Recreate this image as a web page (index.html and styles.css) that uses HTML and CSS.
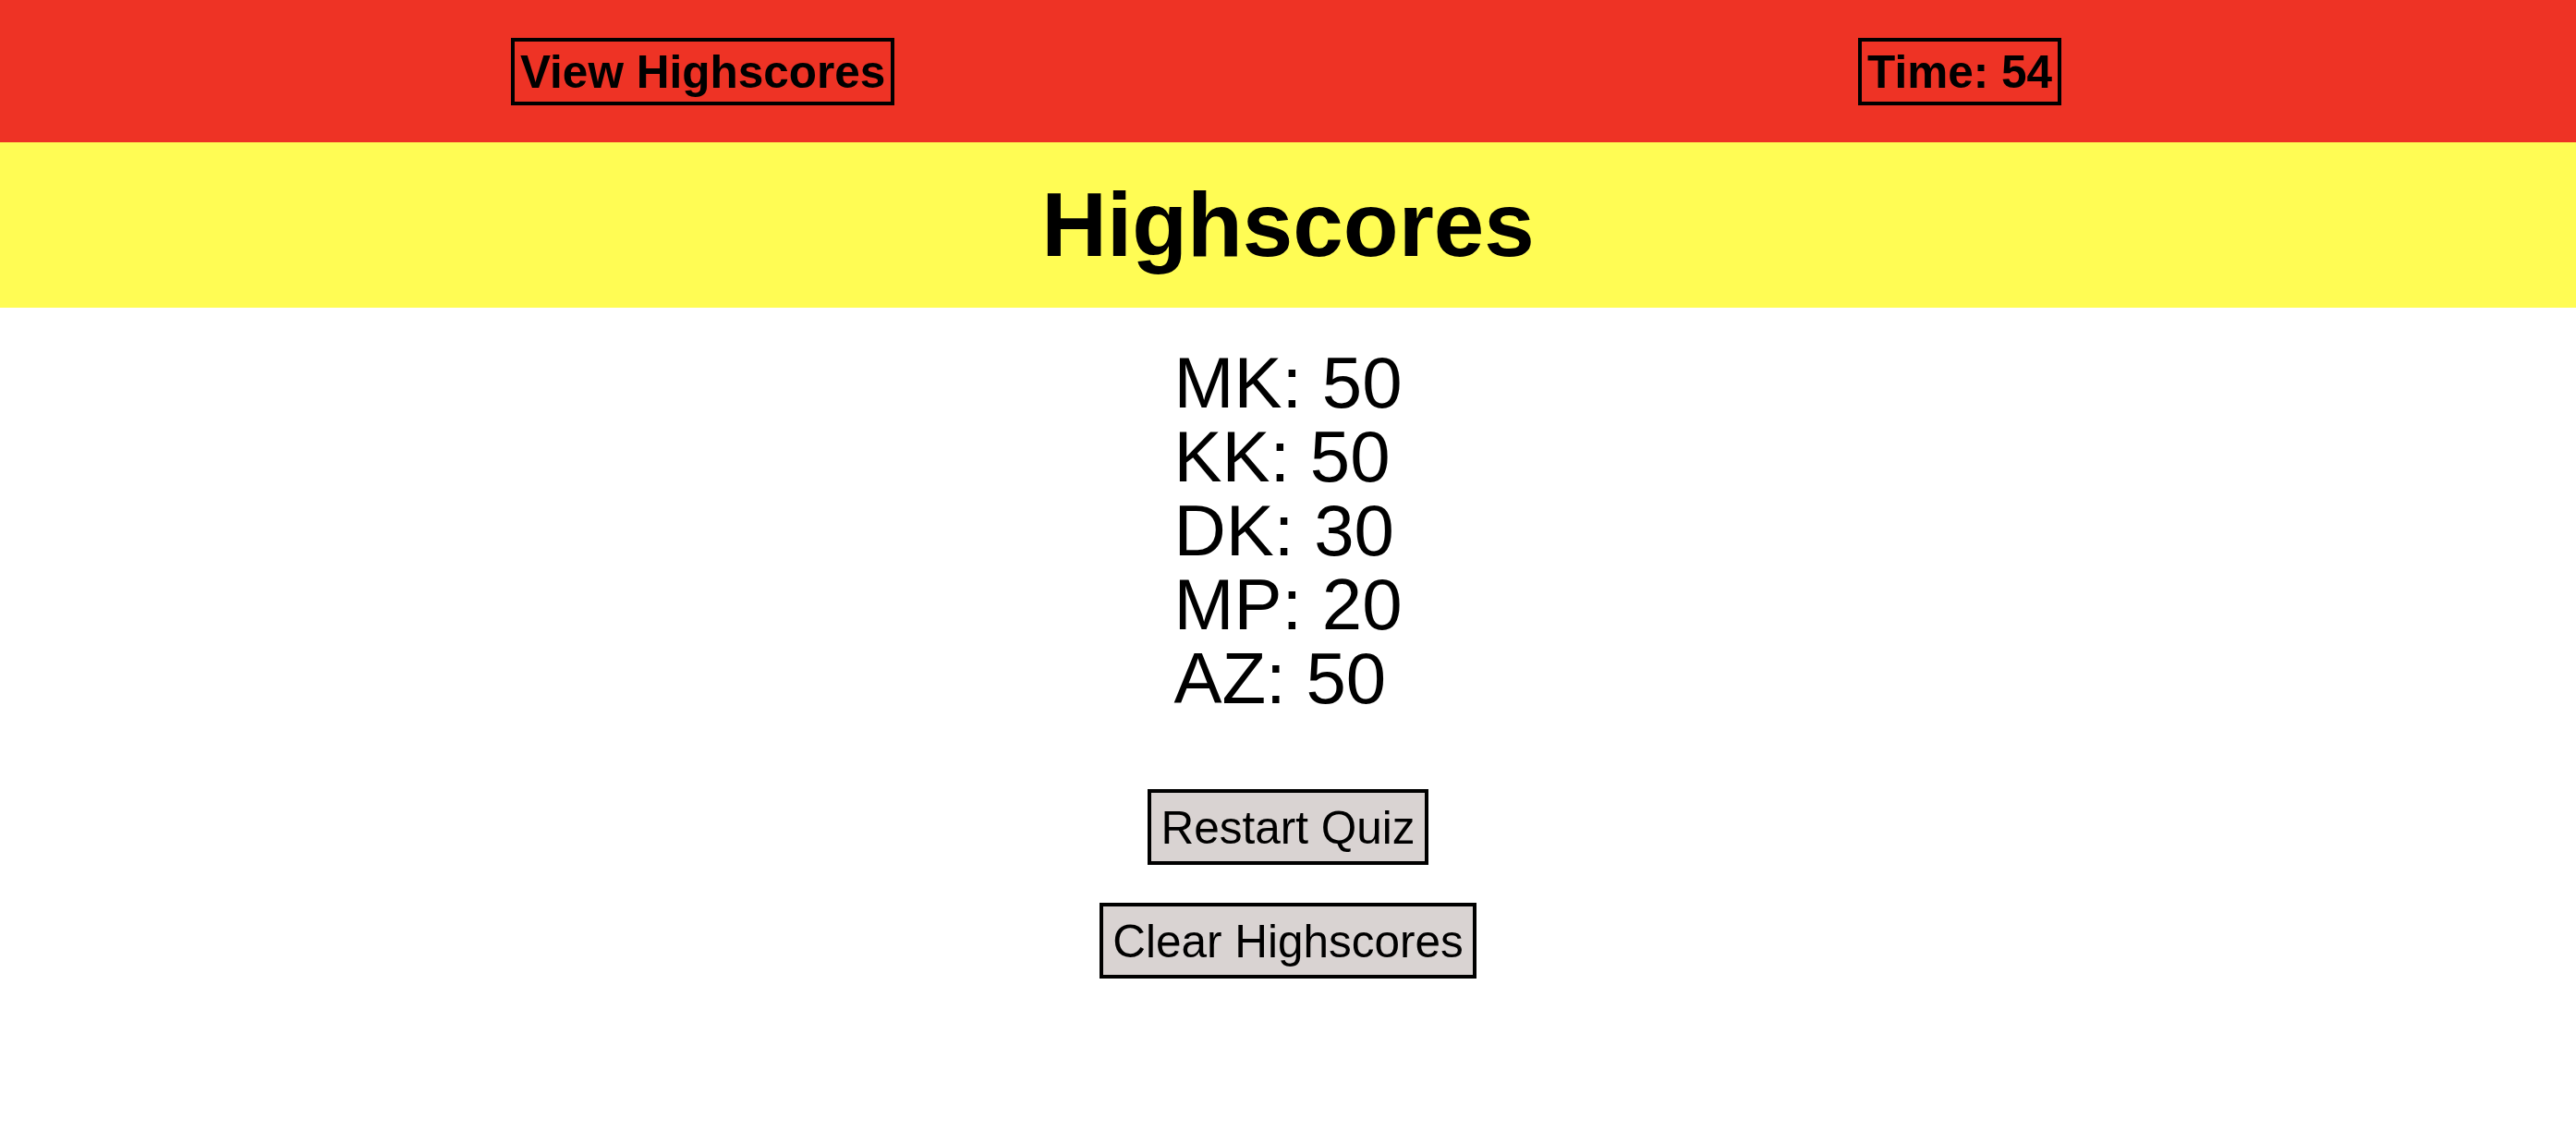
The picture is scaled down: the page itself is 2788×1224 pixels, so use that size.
FILE: index.html
```html
<!DOCTYPE html>
<html lang="en">
<head>
<meta charset="utf-8">
<title>Highscores</title>
<link rel="stylesheet" href="styles.css">
</head>
<body>
  <header class="topbar">
    <a class="topbar-box" href="#">View Highscores</a>
    <div class="topbar-box">Time: 54</div>
  </header>
  <section class="banner">
    <h1 class="banner-title">Highscores</h1>
  </section>
  <main class="scores">
    <ul class="score-list">
      <li>MK: 50</li>
      <li>KK: 50</li>
      <li>DK: 30</li>
      <li>MP: 20</li>
      <li>AZ: 50</li>
    </ul>
    <div class="actions">
      <button class="action-btn" type="button">Restart Quiz</button>
      <button class="action-btn" type="button">Clear Highscores</button>
    </div>
  </main>
</body>
</html>
```
FILE: styles.css
```css
* {
  box-sizing: border-box;
}

html, body {
  margin: 0;
  padding: 0;
  background: #ffffff;
  color: #000000;
  font-family: "Liberation Sans", Arial, Helvetica, sans-serif;
}

.topbar {
  height: 154px;
  background: #ee3325;
  display: flex;
  align-items: center;
  justify-content: space-between;
  padding: 0 557px 0 553px;
}

.topbar-box {
  display: block;
  border: 4px solid #000000;
  padding: 4px 6px;
  font-size: 49.5px;
  font-weight: bold;
  line-height: 57px;
  color: #000000;
  text-decoration: none;
  white-space: nowrap;
}

.banner {
  background: #fffc54;
}

.banner-title {
  margin: 0;
  padding: 33px 0;
  font-size: 98px;
  line-height: 113px;
  font-weight: bold;
  text-align: center;
}

.scores {
  display: flex;
  flex-direction: column;
  align-items: center;
  padding-top: 41px;
}

.score-list {
  list-style: none;
  margin: 0;
  padding: 0;
  font-size: 78px;
  line-height: 80px;
  text-align: left;
}

.actions {
  display: flex;
  flex-direction: column;
  align-items: center;
  gap: 41px;
  margin-top: 80px;
}

.action-btn {
  display: block;
  margin: 0;
  border: 4px solid #000000;
  border-radius: 0;
  background: #d9d3d2;
  color: #000000;
  font-family: "Liberation Sans", Arial, Helvetica, sans-serif;
  font-size: 49.5px;
  line-height: 57px;
  padding: 9px 10px 8px;
}
```
